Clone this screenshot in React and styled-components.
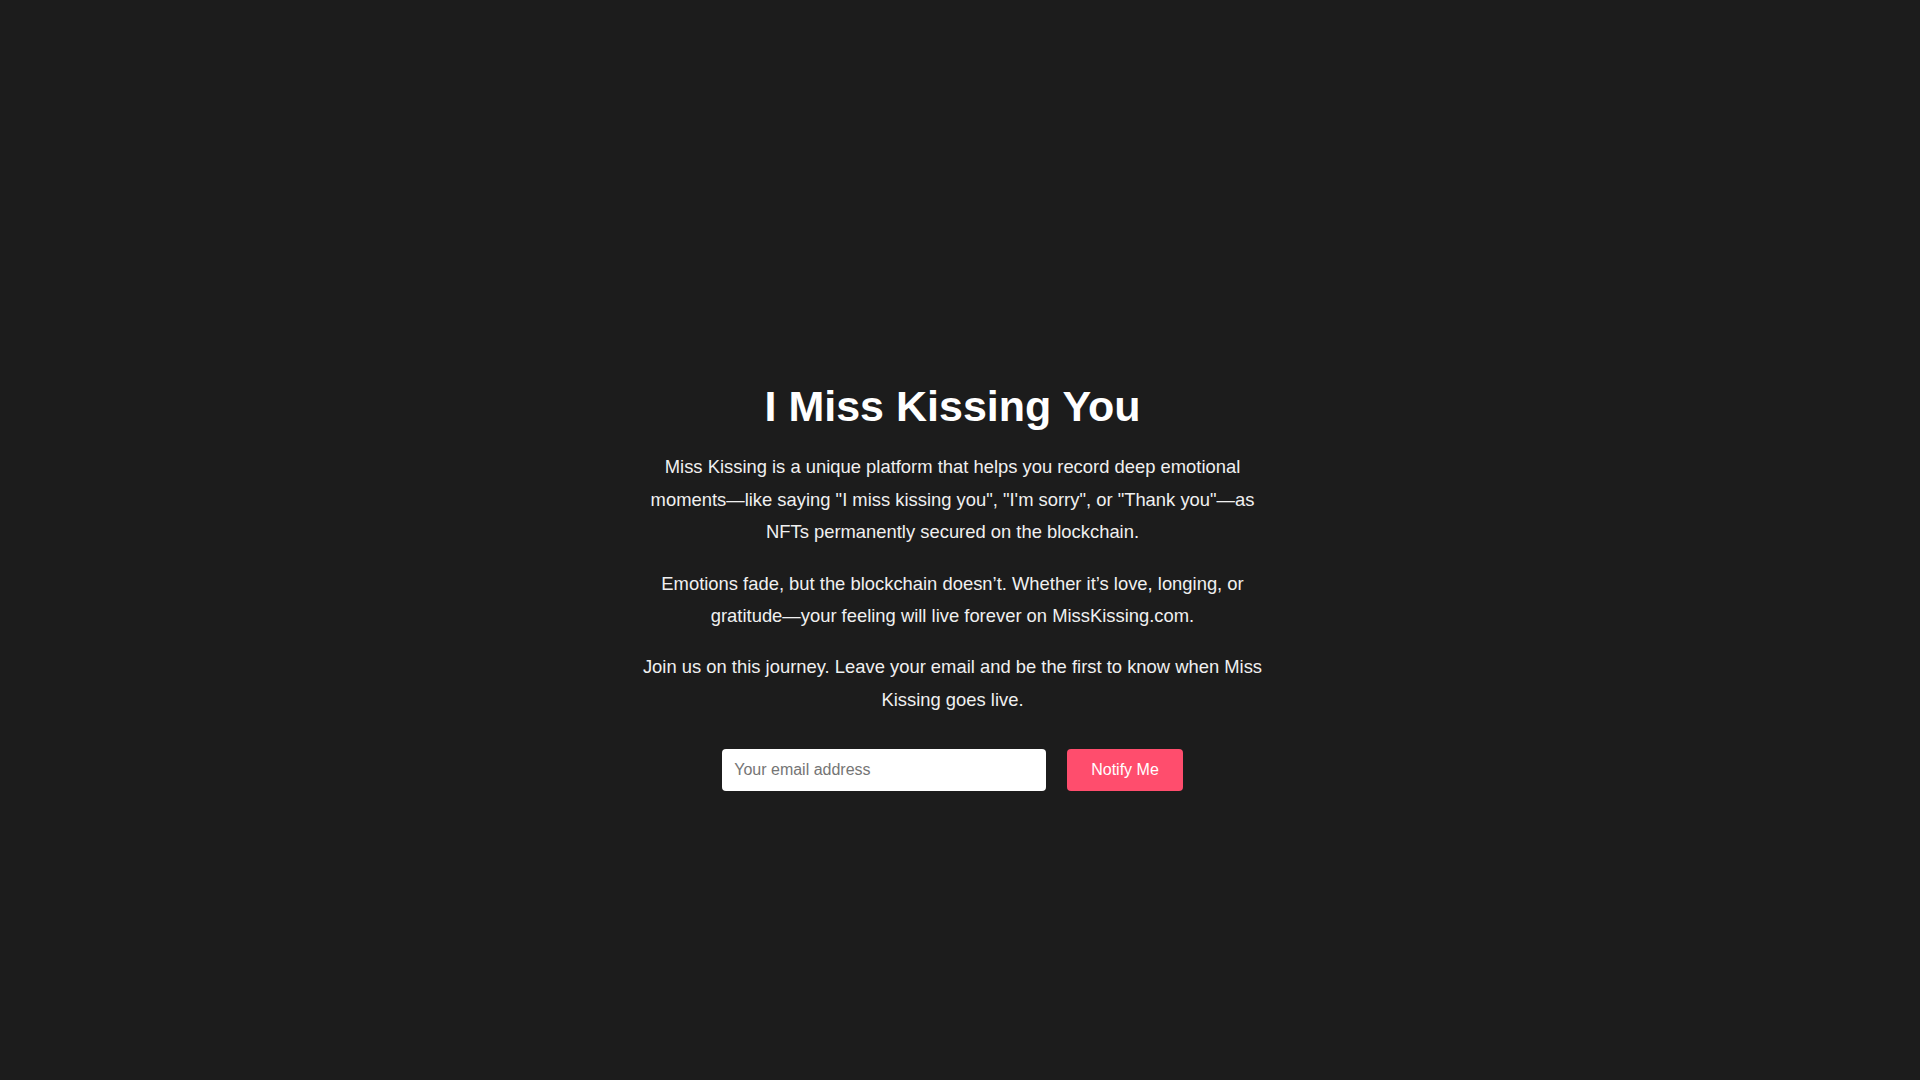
import React, { useState } from 'react';
import styled, { createGlobalStyle } from 'styled-components';

const GlobalStyle = createGlobalStyle`
	html, body {
		margin: 0;
	}
	body {
		background-color: #1c1c1c;
		color: #f0f0f0;
		font-family: "Liberation Sans", Arial, Helvetica, sans-serif;
		height: 100vh;
		padding: 2rem calc(2rem + 15px) 2rem 2rem;
		display: flex;
		align-items: center;
		justify-content: center;
	}
	#root {
		width: 100%;
		display: flex;
		justify-content: center;
	}
`;

const Container = styled.main`
	max-width: 640px;
	width: 100%;
	text-align: center;
`;

const Heading = styled.h1`
	font-size: 43px;
	font-weight: bold;
	color: #ffffff;
	margin: 0.67em 0 20px;
`;

const Text = styled.p`
	font-size: 18.4px;
	line-height: 1.78;
	margin: 0 0 1em;
`;

const Form = styled.form`
	display: flex;
	justify-content: center;
	gap: 21px;
	margin-top: 32px;
`;

const EmailInput = styled.input`
	width: 300px;
	padding: 12px;
	border: none;
	border-radius: 4px;
	background: #ffffff;
	color: #222;
	font-family: inherit;
	font-size: 16px;
	line-height: 18px;
	outline: none;

	&::placeholder {
		color: #757575;
	}
`;

const NotifyButton = styled.button`
	padding: 12px 24px;
	border: none;
	border-radius: 4px;
	background-color: #ff4d6d;
	color: #ffffff;
	font-family: inherit;
	font-size: 16px;
	line-height: 18px;
	cursor: pointer;

	&:hover {
		background-color: #ff3358;
	}
`;

export default function App() {
	const [ email, setEmail ] = useState( '' );

	const onSubmit = e => {
		e.preventDefault();
	};

	return (
		<>
			<GlobalStyle />
			<Container>
				<Heading>I Miss Kissing You</Heading>
				<Text>
					Miss Kissing is a unique platform that helps you record deep emotional moments—like saying "I miss kissing you", "I'm sorry", or "Thank you"—as NFTs permanently secured on the blockchain.
				</Text>
				<Text>
					Emotions fade, but the blockchain doesn’t. Whether it’s love, longing, or gratitude—your feeling will live forever on MissKissing.com.
				</Text>
				<Text>
					Join us on this journey. Leave your email and be the first to know when Miss Kissing goes live.
				</Text>
				<Form onSubmit={ onSubmit }>
					<EmailInput
						type="email"
						placeholder="Your email address"
						value={ email }
						onChange={ e => setEmail( e.target.value ) }
					/>
					<NotifyButton type="submit">Notify Me</NotifyButton>
				</Form>
			</Container>
		</>
	);
}
